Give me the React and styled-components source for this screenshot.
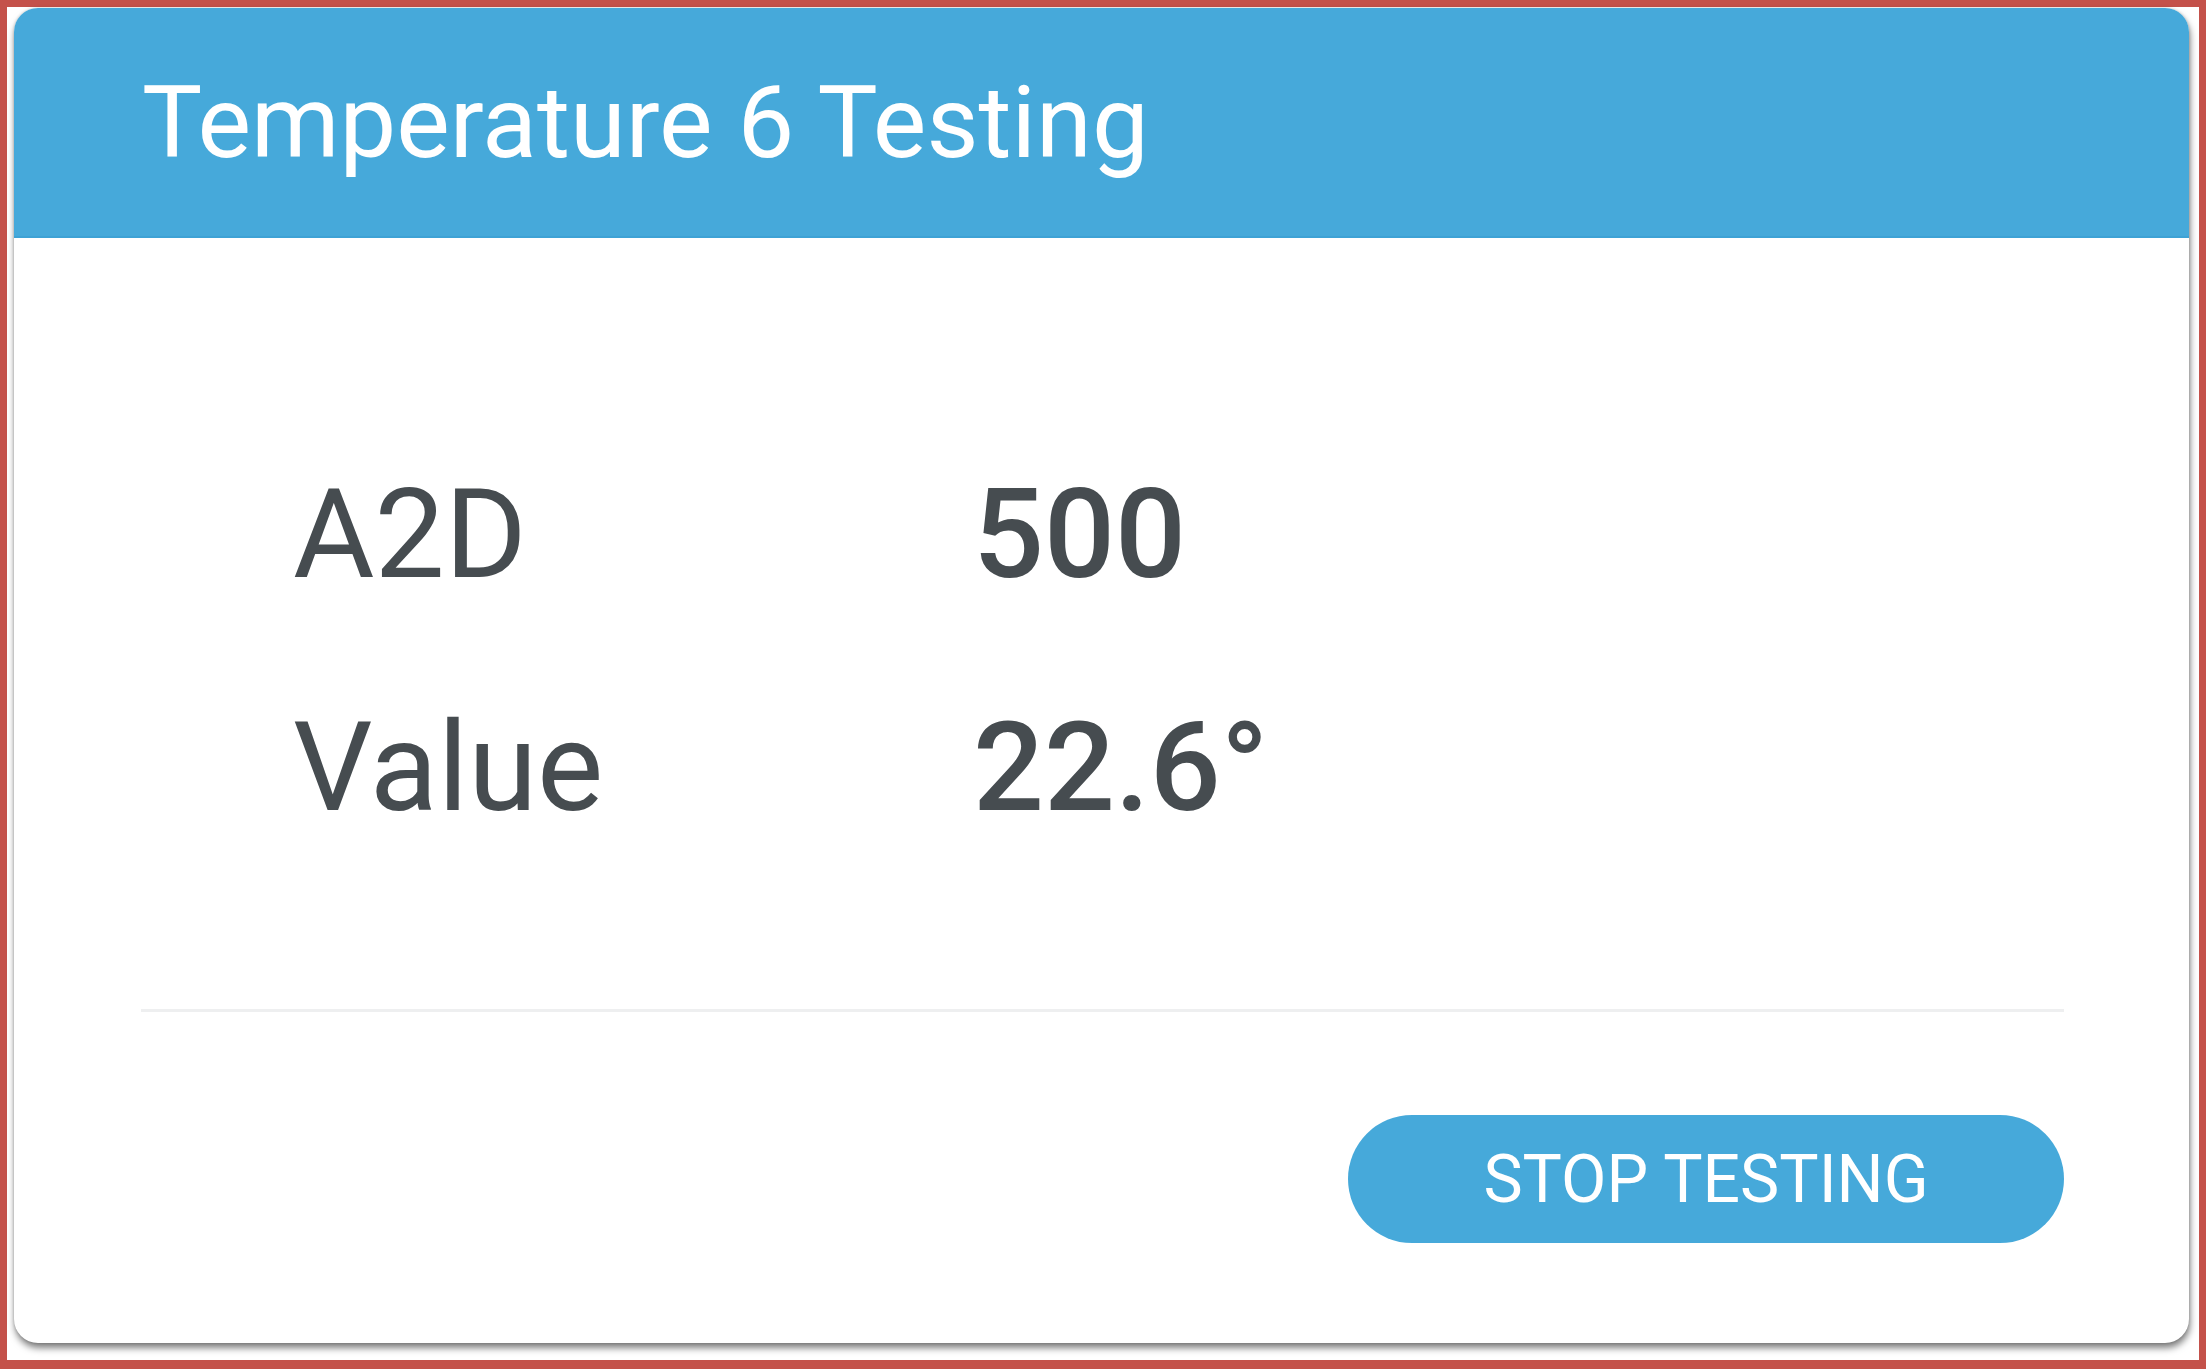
import React from 'react';
import styled, { createGlobalStyle } from 'styled-components';

const GlobalStyle = createGlobalStyle`
  html, body {
    margin: 0;
    padding: 0;
    background: #fff;
  }
  body {
    font-family: Roboto, "Liberation Sans", Arial, sans-serif;
  }
`;

const Frame = styled.div`
  box-sizing: border-box;
  width: 2206px;
  height: 1369px;
  border: 7px solid #c4514a;
  border-bottom-width: 9px;
  padding: 1px 10px 0 7px;
  background: #fff;
`;

const Card = styled.div`
  display: flex;
  flex-direction: column;
  background: #fff;
  border-radius: 24px;
  overflow: hidden;
  box-shadow: 1px 5px 7px rgba(0, 0, 0, 0.5), 0 0 3px rgba(0, 0, 0, 0.18);
`;

const Header = styled.div`
  height: 230px;
  display: flex;
  align-items: center;
  padding-left: 128px;
  background: #46a9da;
  border-bottom: 2px solid #3ea2d5;
  box-sizing: border-box;
`;

const Title = styled.h2`
  margin: 0;
  font-weight: 400;
  font-size: 101px;
  color: #fff;
`;

const Readings = styled.div`
  display: grid;
  grid-template-columns: 680px auto;
  row-gap: 108px;
  padding: 234px 0 0 279px;
`;

const Label = styled.div`
  font-size: 125px;
  line-height: 1;
  font-weight: 400;
  color: #464c50;
`;

const Reading = styled(Label)`
  font-weight: 500;
`;

const Divider = styled.hr`
  margin: 179px 125px 0 127px;
  border: none;
  height: 3px;
  background: #eeeff0;
`;

const Actions = styled.div`
  display: flex;
  justify-content: flex-end;
  padding: 103px 125px 100px 0;
`;

const PillButton = styled.button`
  width: 716px;
  height: 128px;
  border: none;
  border-radius: 64px;
  background: #46a9da;
  color: #fff;
  font-family: Roboto, "Liberation Sans", Arial, sans-serif;
  font-size: 66px;
  font-weight: 400;
  text-transform: uppercase;
  cursor: pointer;
`;

const rows = [
  { label: 'A2D', value: '500' },
  { label: 'Value', value: '22.6°' },
];

export default function App() {
  return (
    <>
      <GlobalStyle />
      <Frame>
        <Card>
          <Header>
            <Title>Temperature 6 Testing</Title>
          </Header>
          <Readings>
            {rows.map((r) => (
              <React.Fragment key={r.label}>
                <Label>{r.label}</Label>
                <Reading>{r.value}</Reading>
              </React.Fragment>
            ))}
          </Readings>
          <Divider />
          <Actions>
            <PillButton>Stop testing</PillButton>
          </Actions>
        </Card>
      </Frame>
    </>
  );
}
